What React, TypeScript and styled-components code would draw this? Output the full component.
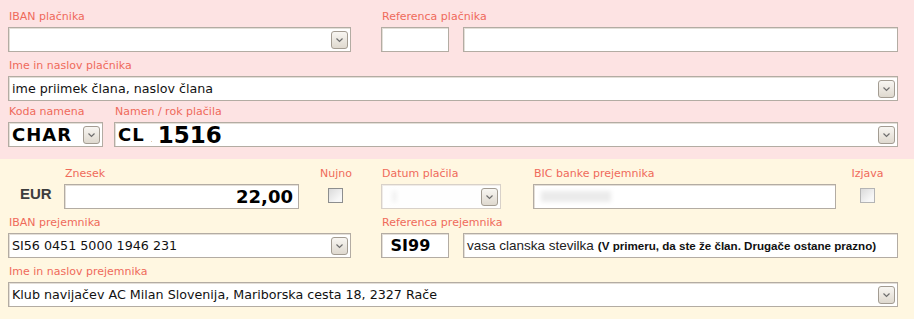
import React from "react";
import styled, { createGlobalStyle } from "styled-components";

const GlobalStyle = createGlobalStyle`
  html, body { margin: 0; padding: 0; background: #fff7e1; }
  body { font-family: "DejaVu Sans", Verdana, sans-serif; }
`;

const Page = styled.div`
  width: 914px;
`;

const Section = styled.section<{ $tone: "payer" | "payee"; $top: number }>`
  background: ${(p) => (p.$tone === "payer" ? "#fde3e3" : "#fff7e1")};
  padding: ${(p) => p.$top}px 16px 12px 8px;
  display: flex;
  flex-direction: column;
`;

const Row = styled.div<{ $mt?: number }>`
  display: flex;
  align-items: flex-start;
  margin-top: ${(p) => p.$mt ?? 0}px;
`;

const Group = styled.div<{ $w?: number; $ml?: number; $center?: boolean }>`
  display: flex;
  flex-direction: column;
  ${(p) => (p.$w ? `width: ${p.$w}px; flex: none;` : `flex: 1; min-width: 0;`)}
  margin-left: ${(p) => p.$ml ?? 0}px;
  align-items: ${(p) => (p.$center ? "center" : "stretch")};
`;

const Label = styled.div`
  height: 14px;
  line-height: 14px;
  margin-bottom: 3px;
  padding-left: 1px;
  font-family: "DejaVu Sans", Verdana, sans-serif;
  font-size: 11px;
  color: #ef6a5b;
  white-space: nowrap;
`;

const FieldPair = styled.div`
  display: flex;
  gap: 14px;
`;

const Field = styled.div<{ $w?: number; $grow?: boolean; $disabled?: boolean; $right?: boolean }>`
  box-sizing: border-box;
  height: 25px;
  flex: ${(p) => (p.$grow ? "1 1 0" : "none")};
  min-width: 0;
  ${(p) => (p.$w ? `width: ${p.$w}px;` : "")}
  display: flex;
  align-items: center;
  justify-content: ${(p) => (p.$right ? "flex-end" : "flex-start")};
  padding: ${(p) => (p.$right ? "0 5px 0 4px" : "0 2px 0 3px")};
  background: ${(p) => (p.$disabled ? "#fefefe" : "#ffffff")};
  border: 1px solid ${(p) => (p.$disabled ? "#d8d1c9" : "#b3aca3")};
  box-shadow: inset 1px 1px 0 ${(p) => (p.$disabled ? "#f0ece8" : "#e4dfd8")};
  overflow: hidden;
`;

const Value = styled.span`
  flex: 1;
  min-width: 0;
  font-family: "DejaVu Sans", Verdana, sans-serif;
  font-size: 12.7px;
  color: #111;
  white-space: nowrap;
  overflow: hidden;
`;

const Code = styled.span<{ $size: number; $spacing?: number }>`
  font-family: "DejaVu Sans", Verdana, sans-serif;
  font-weight: bold;
  font-size: ${(p) => p.$size}px;
  letter-spacing: ${(p) => p.$spacing ?? 0}px;
  color: #000;
  white-space: nowrap;
`;

const Dot = styled.span`
  width: 13px;
  height: 14px;
  flex: none;
  display: flex;
  align-items: flex-end;
  justify-content: center;
  &::before {
    content: "";
    width: 1px;
    height: 1px;
    background: #e0c8b0;
  }
`;

const Grow = styled.span`
  flex: 1;
`;

const MemberText = styled.span`
  font-family: "Liberation Sans", Arial, sans-serif;
  font-size: 13.5px;
  color: #222;
  white-space: nowrap;
`;

const Hint = styled.span`
  margin-left: 4px;
  font-family: "Liberation Sans", Arial, sans-serif;
  font-weight: bold;
  font-size: 11.6px;
  color: #111;
  white-space: nowrap;
`;

const Blurred = styled.span<{ $w: number; $ml: number }>`
  width: ${(p) => p.$w}px;
  height: 11px;
  margin-left: ${(p) => p.$ml}px;
  background: #ebebeb;
  filter: blur(2px);
  flex: none;
`;

const SelectButton = styled.span`
  box-sizing: border-box;
  width: 17px;
  height: 18px;
  margin-left: auto;
  flex: none;
  display: flex;
  align-items: center;
  justify-content: center;
  border: 1px solid #a39c92;
  border-radius: 3px;
  background: linear-gradient(#f8f6f2, #dfd9cf);
`;

const Checkbox = styled.span<{ $muted?: boolean }>`
  box-sizing: border-box;
  width: 15px;
  height: 15px;
  margin-top: 4px;
  border: 1px solid ${(p) => (p.$muted ? "#b4b4b4" : "#8d8e8e")};
  background: linear-gradient(135deg, #dadada, #f7f7f7 75%);
`;

const EurCell = styled.div`
  box-sizing: border-box;
  width: 56px;
  flex: none;
  padding: 17px 0 0 12px;
  line-height: 19px;
  font-family: "Liberation Sans", Arial, sans-serif;
  font-weight: bold;
  font-size: 15px;
  color: #3d3d3d;
`;

const Select = () => (
  <SelectButton>
    <svg width="9" height="6" viewBox="0 0 9 6">
      <path d="M1.5 1.5 L4.5 4.5 L7.5 1.5" fill="none" stroke="#6e6e6e" strokeWidth="1.2" />
    </svg>
  </SelectButton>
);

export default function App() {
  return (
    <Page>
      <GlobalStyle />
      <Section $tone="payer" $top={10}>
        <Row>
          <Group $w={343}>
            <Label>IBAN plačnika</Label>
            <Field>
              <Value />
              <Select />
            </Field>
          </Group>
          <Group $ml={30}>
            <Label>Referenca plačnika</Label>
            <FieldPair>
              <Field $w={68} />
              <Field $grow />
            </FieldPair>
          </Group>
        </Row>
        <Row $mt={7}>
          <Group>
            <Label>Ime in naslov plačnika</Label>
            <Field>
              <Value>ime priimek člana, naslov člana</Value>
              <Select />
            </Field>
          </Group>
        </Row>
        <Row $mt={4}>
          <Group $w={95}>
            <Label>Koda namena</Label>
            <Field>
              <Code $size={18} $spacing={1}>CHAR</Code>
              <Select />
            </Field>
          </Group>
          <Group $ml={11}>
            <Label>Namen / rok plačila</Label>
            <Field>
              <Code $size={18} $spacing={1}>CL</Code>
              <Dot />
              <Code $size={23}>1516</Code>
              <Grow />
              <Select />
            </Field>
          </Group>
        </Row>
      </Section>

      <Section $tone="payee" $top={8}>
        <Row>
          <EurCell>EUR</EurCell>
          <Group $w={235}>
            <Label>Znesek</Label>
            <Field $right>
              <Code $size={18}>22,00</Code>
            </Field>
          </Group>
          <Group $w={45} $ml={14} $center>
            <Label>Nujno</Label>
            <Checkbox />
          </Group>
          <Group $w={120} $ml={23}>
            <Label>Datum plačila</Label>
            <Field $disabled>
              <Blurred $w={3} $ml={8} />
              <Select />
            </Field>
          </Group>
          <Group $w={303} $ml={32}>
            <Label>BIC banke prejemnika</Label>
            <Field>
              <Blurred $w={70} $ml={4} />
            </Field>
          </Group>
          <Group $w={34} $ml={14} $center>
            <Label>Izjava</Label>
            <Checkbox $muted />
          </Group>
        </Row>
        <Row $mt={7}>
          <Group $w={343}>
            <Label>IBAN prejemnika</Label>
            <Field>
              <Value>SI56 0451 5000 1946 231</Value>
              <Select />
            </Field>
          </Group>
          <Group $ml={30}>
            <Label>Referenca prejemnika</Label>
            <FieldPair>
              <Field $w={68}>
                <Code $size={16}>&nbsp;SI99</Code>
              </Field>
              <Field $grow>
                <MemberText>vasa clanska stevilka</MemberText>
                <Hint>(V primeru, da ste že član. Drugače ostane prazno)</Hint>
              </Field>
            </FieldPair>
          </Group>
        </Row>
        <Row $mt={7}>
          <Group>
            <Label>Ime in naslov prejemnika</Label>
            <Field>
              <Value>Klub navijačev AC Milan Slovenija, Mariborska cesta 18, 2327 Rače</Value>
              <Select />
            </Field>
          </Group>
        </Row>
      </Section>
    </Page>
  );
}
